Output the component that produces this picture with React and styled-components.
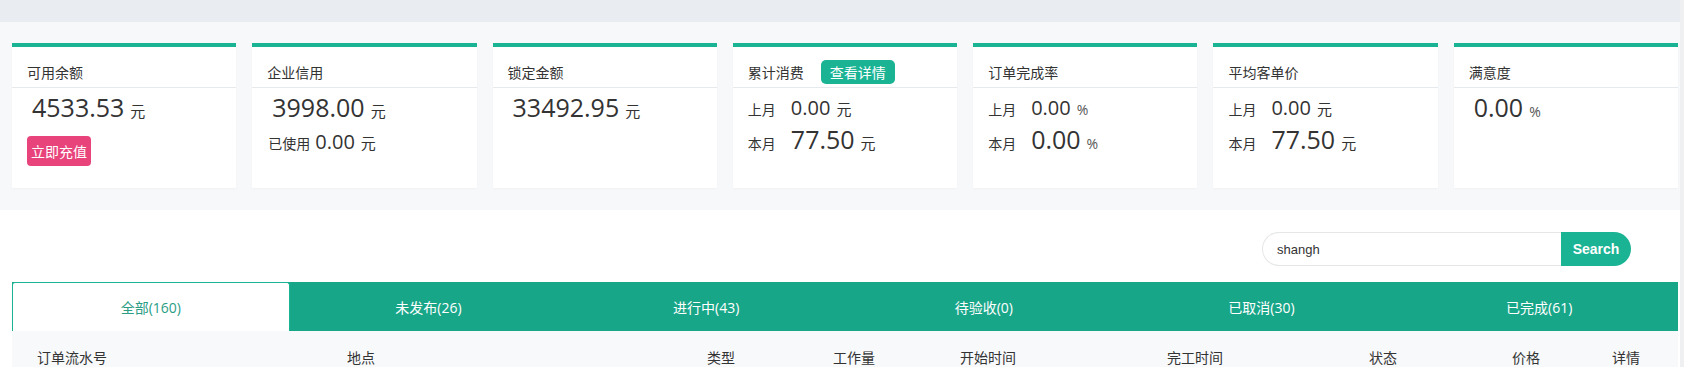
import styled, { createGlobalStyle } from 'styled-components';

const GlobalStyle = createGlobalStyle`
  body {
    margin: 0;
    background: #eef0f2;
    font-family: "Open Sans", "Noto Sans CJK SC", sans-serif;
    color: #333;
  }
`

const cards = [
    { title: '可用余额', kind: 'balance', value: '4533.53', unit: '元' },
    { title: '企业信用', kind: 'credit', value: '3998.00', unit: '元', used: '0.00' },
    { title: '锁定金额', kind: 'plain', value: '33492.95', unit: '元' },
    { title: '累计消费', kind: 'month', last: '0.00', current: '77.50', unit: '元', badge: '查看详情' },
    { title: '订单完成率', kind: 'month', last: '0.00', current: '0.00', unit: '%' },
    { title: '平均客单价', kind: 'month', last: '0.00', current: '77.50', unit: '元' },
    { title: '满意度', kind: 'plain', value: '0.00', unit: '%' },
]

const tabs = ['全部(160)', '未发布(26)', '进行中(43)', '待验收(0)', '已取消(30)', '已完成(61)']

const columns = ['订单流水号', '地点', '类型', '工作量', '开始时间', '完工时间', '状态', '价格', '详情']

const StatCard = ({ card }) => {
    return (
        <Card>
            <CardHead>
                <CardTitle>{card.title}</CardTitle>
                {card.badge && <Badge>{card.badge}</Badge>}
            </CardHead>
            <CardBody>
                {card.kind === 'month' ? (
                    <>
                        <MonthRow>
                            <MonthLabel>上月</MonthLabel>
                            <Amount size={20}>{card.last}</Amount>
                            <Unit percent={card.unit === '%'}>{card.unit}</Unit>
                        </MonthRow>
                        <MonthRow second>
                            <MonthLabel>本月</MonthLabel>
                            <Amount size={25}>{card.current}</Amount>
                            <Unit percent={card.unit === '%'}>{card.unit}</Unit>
                        </MonthRow>
                    </>
                ) : (
                    <BigRow>
                        <Amount size={25}>{card.value}</Amount>
                        <Unit percent={card.unit === '%'}>{card.unit}</Unit>
                    </BigRow>
                )}
                {card.kind === 'balance' && <RechargeButton>立即充值</RechargeButton>}
                {card.kind === 'credit' && (
                    <UsedRow>
                        <UsedLabel>已使用</UsedLabel>
                        <Amount size={20}>{card.used}</Amount>
                        <Unit>{card.unit}</Unit>
                    </UsedRow>
                )}
            </CardBody>
        </Card>
    )
}

const App = () => {
    return (
        <>
            <GlobalStyle />
            <Page>
                <TopBand />
                <StatsArea>
                    <CardGrid>
                        {cards.map((card) => (
                            <StatCard key={card.title} card={card} />
                        ))}
                    </CardGrid>
                </StatsArea>
                <OrdersArea>
                    <SearchRow>
                        <SearchInput defaultValue="shangh" type="text" />
                        <SearchButton>Search</SearchButton>
                    </SearchRow>
                    <TabBar>
                        {tabs.map((tab, i) => (
                            <Tab key={tab} active={i === 0}>{tab}</Tab>
                        ))}
                    </TabBar>
                    <TableHead>
                        {columns.map((col) => (
                            <HeadCell key={col}>{col}</HeadCell>
                        ))}
                    </TableHead>
                </OrdersArea>
            </Page>
        </>
    );
};

export default App;

const Page = styled.div`
    width: 1680px;
    min-height: 367px;
    background: #fff;
`
const TopBand = styled.div`
    height: 22px;
    background: #e9edf1;
`
const StatsArea = styled.div`
    background: #f6f8fa;
    padding: 21px 2px 22px 12px;
`
const CardGrid = styled.div`
    display: grid;
    grid-template-columns: repeat(7, 1fr);
    gap: 16px;
`
const Card = styled.div`
    height: 145px;
    box-sizing: border-box;
    background: #fff;
    border-top: 4px solid #1ab394;
    box-shadow: 0 1px 2px rgba(0, 0, 0, 0.03);
`
const CardHead = styled.div`
    height: 41px;
    box-sizing: border-box;
    padding: 9px 15px 0;
    display: flex;
    align-items: center;
    gap: 17px;
    border-bottom: 1px solid #e7eaec;
`
const CardTitle = styled.span`
    font-size: 14px;
    color: #333;
`
const Badge = styled.span`
    height: 24px;
    padding: 0 9px;
    display: flex;
    align-items: center;
    background: #1ab394;
    color: #fff;
    font-size: 14px;
    border-radius: 5px;
`
const CardBody = styled.div`
    padding: 7px 15px 0;
`
const BigRow = styled.div`
    display: flex;
    align-items: baseline;
    margin-left: 5px;
`
const MonthRow = styled.div`
    display: flex;
    align-items: baseline;
    margin-top: ${(p) => (p.second ? '9px' : '3px')};
`
const MonthLabel = styled.span`
    font-size: 14px;
    line-height: 1;
    margin-right: 15px;
`
const Amount = styled.span`
    font-size: ${(p) => p.size}px;
    line-height: 1;
    color: #333;
`
const Unit = styled.span`
    font-size: ${(p) => (p.percent ? '14px' : '15px')};
    line-height: 1;
    margin-left: 6px;
    color: ${(p) => (p.percent ? '#555' : '#333')};
`
const RechargeButton = styled.button`
    display: block;
    margin-top: 16px;
    height: 30px;
    width: 64px;
    padding: 0;
    border: none;
    border-radius: 4px;
    background: #e8437b;
    color: #fff;
    font-family: "Open Sans", "Noto Sans CJK SC", sans-serif;
    font-size: 14px;
`
const UsedRow = styled.div`
    display: flex;
    align-items: baseline;
    margin-top: 12px;
    margin-left: 1px;
`
const UsedLabel = styled.span`
    font-size: 14px;
    line-height: 1;
    margin-right: 5px;
`
const OrdersArea = styled.div`
    background: #fff;
    padding: 22px 2px 0 12px;
`
const SearchRow = styled.div`
    display: flex;
    justify-content: flex-end;
    padding-right: 47px;
    height: 34px;
`
const SearchInput = styled.input`
    width: 299px;
    box-sizing: border-box;
    height: 34px;
    border: 1px solid #e5e6e7;
    border-right: none;
    border-radius: 17px 0 0 17px;
    padding: 0 14px;
    font-family: "Liberation Sans", Arial, sans-serif;
    font-size: 13px;
    color: #333;
    outline: none;
`
const SearchButton = styled.button`
    width: 70px;
    height: 34px;
    border: none;
    border-radius: 0 17px 17px 0;
    background: #1ab394;
    color: #fff;
    font-family: "Liberation Sans", Arial, sans-serif;
    font-weight: bold;
    font-size: 14px;
    padding: 0;
`
const TabBar = styled.div`
    margin-top: 16px;
    display: grid;
    grid-template-columns: repeat(6, 1fr);
    background: #18a689;
`
const Tab = styled.div`
    height: 49px;
    box-sizing: border-box;
    display: flex;
    align-items: center;
    justify-content: center;
    font-size: 14px;
    background: ${(p) => (p.active ? '#fff' : '#18a689')};
    color: ${(p) => (p.active ? '#2a9d84' : '#fff')};
    border: ${(p) => (p.active ? '1px solid #1ab394' : 'none')};
    border-bottom: none;
    border-radius: ${(p) => (p.active ? '3px 3px 0 0' : '0')};
`
const TableHead = styled.div`
    display: grid;
    grid-template-columns: 310px 360px 126px 127px 207px 202px 143px 100px 1fr;
    align-items: center;
    height: 52px;
    padding-left: 25px;
    background: #f8f9fb;
`
const HeadCell = styled.div`
    font-size: 14px;
    color: #333;
`
